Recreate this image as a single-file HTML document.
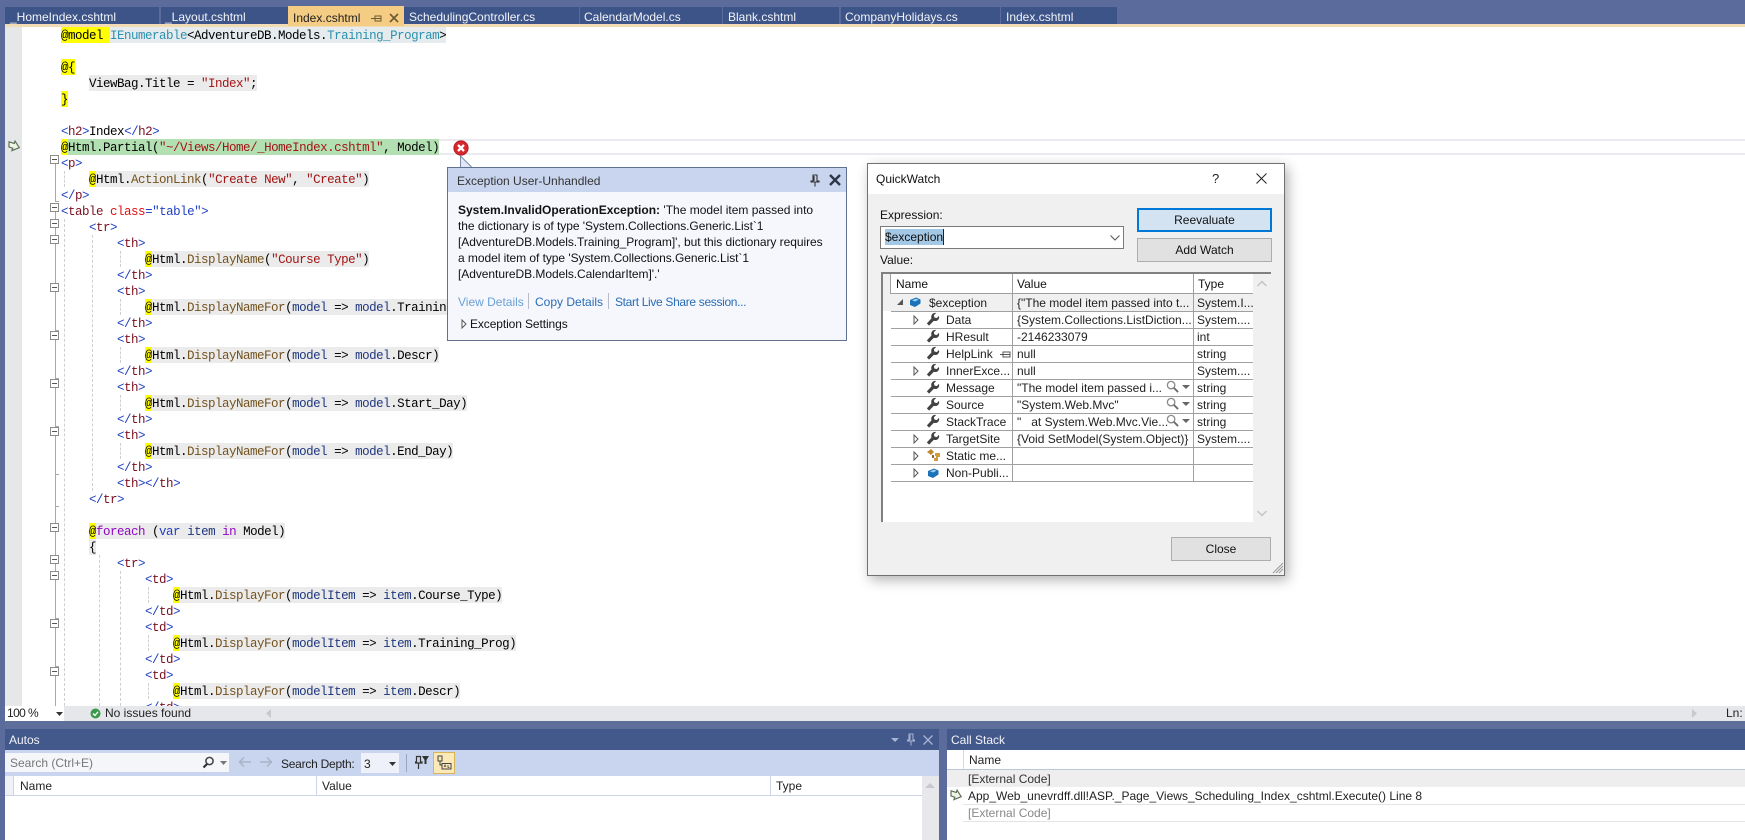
<!DOCTYPE html>
<html><head><meta charset="utf-8"><style>
html,body{margin:0;padding:0;width:1745px;height:840px;overflow:hidden;background:#fff}
#root{position:relative;width:1745px;height:840px;overflow:hidden;font:12px/16px "Liberation Sans",sans-serif;color:#1e1e1e}
.b{position:absolute}
.x{position:absolute;white-space:pre;font:12px/16px "Liberation Sans",sans-serif}
.w{color:#f1f3f8}
#code{position:absolute;left:0;top:27px;width:1745px;height:679px;overflow:hidden}
.l{position:absolute;white-space:pre;height:16px;margin-top:1px;font:12.5px/16px "Liberation Mono",monospace;letter-spacing:-.5px;color:#000}
.y{background:#ffff00;padding-top:2px}.g{background:#ebebeb;padding-top:2px}.gb{background:#e6ebee;padding-top:2px}
.d{color:#1f3fc4}.t{color:#7a1020}.a{color:#e01010}.s{color:#a31515}.c{color:#2b91af}.m{color:#74531f}.v{color:#1f377f}.p{color:#8f08c4}
.f{position:absolute;left:50px;width:7px;height:7px;border:1px solid #8c8c8c;background:#fff}
.f:after{content:"";position:absolute;left:1px;top:3px;width:5px;height:1px;background:#555}
.fl{position:absolute;left:55px;width:1px;background:#a8a8a8}
.ft{position:absolute;left:55px;width:4px;height:1px;background:#a8a8a8}
.ig{position:absolute;width:0;border-left:1px dashed #cfcfcf}
.r{position:absolute;left:891px;width:362px;height:18px;box-sizing:border-box;border-bottom:1px solid #a0a0a0}
.r .x{line-height:17px;top:1px}
.vl{position:absolute;width:1px;background:#a0a0a0}
</style></head><body><div id="root">
<svg width="0" height="0" style="position:absolute"><defs>
<symbol id="wr" viewBox="0 0 16 16"><path fill="#424242" d="M1 13 L3.5 15.5 L9 10 C11.5 11 14.5 9.5 15 6.5 C15.1 5.7 15 5 14.8 4.4 L12.3 7 L9.6 6.3 L9 3.7 L11.6 1.2 C8.8 .5 6.2 2.5 6 5.2 C5.9 6 6 6.6 6.3 7.3 Z"/></symbol>
<symbol id="mg" viewBox="0 0 14 14"><circle cx="5.5" cy="5.5" r="4" fill="none" stroke="#8a8a8a" stroke-width="1.4"/><path d="M8.5 8.5L13 13" stroke="#6a6a6a" stroke-width="2"/></symbol>
<symbol id="cube" viewBox="0 0 12 12"><path fill="#1b72b8" d="M1 4 L7 1.5 L11.5 3.5 L11.5 7.5 L6 11 L1 9 Z"/><path fill="#9fd0f0" d="M3 4.2 L7 2.6 L9.6 3.7 L6 5.5 Z"/></symbol>
<symbol id="arr" viewBox="0 0 14 12"><path fill="#eef6e6" stroke="#5f6f5a" stroke-width="1.2" d="M1 3.5 L6.5 3.5 L6.5 1 L12.5 6 L6.5 11 L6.5 8.5 L2.5 8.5 Z" transform="rotate(18 7 6)"/></symbol>
<symbol id="tri" viewBox="0 0 6 10"><path fill="#fff" stroke="#555" d="M1 1L5 5L1 9Z"/></symbol>
</defs></svg>

<!-- chrome -->
<div class="b" style="left:0;top:0;width:1745px;height:27px;background:#5b6b9b"></div>
<div class="b" style="left:5px;top:24px;width:1740px;height:3px;background:#f2dcb6"></div>
<div class="b" style="left:0;top:0;width:5px;height:840px;background:#5b6b9b"></div>
<div class="b" style="left:5px;top:7px;width:154px;height:17px;background:#3d5488"></div>
<div class="b" style="left:161px;top:7px;width:127px;height:17px;background:#3d5488"></div>
<div class="b" style="left:288px;top:6px;width:116px;height:20px;background:#f5cc84"></div>
<div class="b" style="left:404px;top:7px;width:175px;height:17px;background:#3d5488"></div>
<div class="b" style="left:580px;top:7px;width:142px;height:17px;background:#3d5488"></div>
<div class="b" style="left:723px;top:7px;width:116px;height:17px;background:#3d5488"></div>
<div class="b" style="left:841px;top:7px;width:159px;height:17px;background:#3d5488"></div>
<div class="b" style="left:1001px;top:7px;width:116px;height:17px;background:#3d5488"></div>
<span class="x w" style="left:10px;top:9px">_HomeIndex.cshtml</span>
<span class="x w" style="left:165px;top:9px">_Layout.cshtml</span>
<span class="x" style="left:293px;top:10px;color:#1e1e1e">Index.cshtml</span>
<svg class="b" style="left:371px;top:13px" width="11" height="11" viewBox="0 0 11 11"><path d="M0 5.5H4M4 2.5V8.5M4 3H10V8H4M4 5.5H10" stroke="#6b5a30" fill="none"/></svg>
<svg class="b" style="left:389px;top:13px" width="10" height="10" viewBox="0 0 10 10"><path d="M1 1L9 9M9 1L1 9" stroke="#6b5a30" stroke-width="1.6"/></svg>
<span class="x w" style="left:409px;top:9px">SchedulingController.cs</span>
<span class="x w" style="left:584px;top:9px">CalendarModel.cs</span>
<span class="x w" style="left:728px;top:9px">Blank.cshtml</span>
<span class="x w" style="left:845px;top:9px">CompanyHolidays.cs</span>
<span class="x w" style="left:1006px;top:9px">Index.cshtml</span>

<!-- editor -->
<div id="code">
<div class="b" style="left:5px;top:0;width:17px;height:679px;background:#e6e7e8"></div>
<div class="b" style="left:439px;top:112px;width:1306px;height:2px;background:#eaeaf0"></div>
<div class="b" style="left:439px;top:126px;width:1306px;height:2px;background:#eaeaf0"></div>
<div class="b" style="left:61px;top:112px;width:378px;height:16px;background:#b3e0b3"></div>

<div class="fl" style="top:128px;height:46px"></div><div class="ft" style="top:174px"></div>
<div class="fl" style="top:176px;height:503px"></div>
<div class="ft" style="top:303px"></div><div class="ft" style="top:351px"></div><div class="ft" style="top:399px"></div><div class="ft" style="top:447px"></div><div class="ft" style="top:479px"></div><div class="ft" style="top:591px"></div><div class="ft" style="top:639px"></div>
<div class="f" style="top:128px"></div><div class="f" style="top:176px"></div><div class="f" style="top:192px"></div><div class="f" style="top:208px"></div><div class="f" style="top:256px"></div><div class="f" style="top:304px"></div><div class="f" style="top:352px"></div><div class="f" style="top:400px"></div><div class="f" style="top:496px"></div><div class="f" style="top:528px"></div><div class="f" style="top:544px"></div><div class="f" style="top:592px"></div><div class="f" style="top:640px"></div>

<div class="ig" style="left:64px;top:144px;height:16px"></div>
<div class="ig" style="left:64px;top:192px;height:487px"></div>
<div class="ig" style="left:92px;top:208px;height:256px"></div>
<div class="ig" style="left:120px;top:224px;height:16px"></div><div class="ig" style="left:120px;top:272px;height:16px"></div><div class="ig" style="left:120px;top:320px;height:16px"></div><div class="ig" style="left:120px;top:368px;height:16px"></div><div class="ig" style="left:120px;top:416px;height:16px"></div>
<div class="ig" style="left:99px;top:528px;height:151px"></div>
<div class="ig" style="left:120px;top:544px;height:135px"></div>
<div class="ig" style="left:148px;top:560px;height:16px"></div><div class="ig" style="left:148px;top:608px;height:16px"></div><div class="ig" style="left:148px;top:656px;height:16px"></div>

<div class="l" style="left:61px;top:0"><span class="y">@model </span><span class="gb"><span class="c">IEnumerable</span>&lt;AdventureDB.Models.<span class="c">Training_Program</span>&gt;</span></div>
<div class="l" style="left:61px;top:32px"><span class="y">@{</span></div>
<div class="l" style="left:89px;top:48px"><span class="g">ViewBag.Title = <span class="s">"Index"</span>;</span></div>
<div class="l" style="left:61px;top:64px"><span class="y">}</span></div>
<div class="l" style="left:61px;top:96px"><span class="d">&lt;</span><span class="t">h2</span><span class="d">&gt;</span>Index<span class="d">&lt;/</span><span class="t">h2</span><span class="d">&gt;</span></div>
<div class="l" style="left:61px;top:112px"><span class="y">@</span>Html.Partial(<span class="s">"~/Views/Home/_HomeIndex.cshtml"</span>, Model)</div>
<div class="l" style="left:61px;top:128px"><span class="d">&lt;</span><span class="t">p</span><span class="d">&gt;</span></div>
<div class="l" style="left:89px;top:144px"><span class="y">@</span><span class="g">Html.<span class="m">ActionLink</span>(<span class="s">"Create New"</span>, <span class="s">"Create"</span>)</span></div>
<div class="l" style="left:61px;top:160px"><span class="d">&lt;/</span><span class="t">p</span><span class="d">&gt;</span></div>
<div class="l" style="left:61px;top:176px"><span class="d">&lt;</span><span class="t">table</span> <span class="a">class</span><span class="d">="table"&gt;</span></div>
<div class="l" style="left:89px;top:192px"><span class="d">&lt;</span><span class="t">tr</span><span class="d">&gt;</span></div>
<div class="l" style="left:117px;top:208px"><span class="d">&lt;</span><span class="t">th</span><span class="d">&gt;</span></div>
<div class="l" style="left:145px;top:224px"><span class="y">@</span><span class="g">Html.<span class="m">DisplayName</span>(<span class="s">"Course Type"</span>)</span></div>
<div class="l" style="left:117px;top:240px"><span class="d">&lt;/</span><span class="t">th</span><span class="d">&gt;</span></div>
<div class="l" style="left:117px;top:256px"><span class="d">&lt;</span><span class="t">th</span><span class="d">&gt;</span></div>
<div class="l" style="left:145px;top:272px"><span class="y">@</span><span class="g">Html.<span class="m">DisplayNameFor</span>(<span class="v">model</span> =&gt; <span class="v">model</span>.Training_Prog)</span></div>
<div class="l" style="left:117px;top:288px"><span class="d">&lt;/</span><span class="t">th</span><span class="d">&gt;</span></div>
<div class="l" style="left:117px;top:304px"><span class="d">&lt;</span><span class="t">th</span><span class="d">&gt;</span></div>
<div class="l" style="left:145px;top:320px"><span class="y">@</span><span class="g">Html.<span class="m">DisplayNameFor</span>(<span class="v">model</span> =&gt; <span class="v">model</span>.Descr)</span></div>
<div class="l" style="left:117px;top:336px"><span class="d">&lt;/</span><span class="t">th</span><span class="d">&gt;</span></div>
<div class="l" style="left:117px;top:352px"><span class="d">&lt;</span><span class="t">th</span><span class="d">&gt;</span></div>
<div class="l" style="left:145px;top:368px"><span class="y">@</span><span class="g">Html.<span class="m">DisplayNameFor</span>(<span class="v">model</span> =&gt; <span class="v">model</span>.Start_Day)</span></div>
<div class="l" style="left:117px;top:384px"><span class="d">&lt;/</span><span class="t">th</span><span class="d">&gt;</span></div>
<div class="l" style="left:117px;top:400px"><span class="d">&lt;</span><span class="t">th</span><span class="d">&gt;</span></div>
<div class="l" style="left:145px;top:416px"><span class="y">@</span><span class="g">Html.<span class="m">DisplayNameFor</span>(<span class="v">model</span> =&gt; <span class="v">model</span>.End_Day)</span></div>
<div class="l" style="left:117px;top:432px"><span class="d">&lt;/</span><span class="t">th</span><span class="d">&gt;</span></div>
<div class="l" style="left:117px;top:448px"><span class="d">&lt;</span><span class="t">th</span><span class="d">&gt;&lt;/</span><span class="t">th</span><span class="d">&gt;</span></div>
<div class="l" style="left:89px;top:464px"><span class="d">&lt;/</span><span class="t">tr</span><span class="d">&gt;</span></div>
<div class="l" style="left:89px;top:496px"><span class="y">@</span><span class="g"><span class="p">foreach</span> (<span class="d">var</span> <span class="v">item</span> <span class="p">in</span> Model)</span></div>
<div class="l" style="left:89px;top:512px"><span class="g">{</span></div>
<div class="l" style="left:117px;top:528px"><span class="d">&lt;</span><span class="t">tr</span><span class="d">&gt;</span></div>
<div class="l" style="left:145px;top:544px"><span class="d">&lt;</span><span class="t">td</span><span class="d">&gt;</span></div>
<div class="l" style="left:173px;top:560px"><span class="y">@</span><span class="g">Html.<span class="m">DisplayFor</span>(<span class="v">modelItem</span> =&gt; <span class="v">item</span>.Course_Type)</span></div>
<div class="l" style="left:145px;top:576px"><span class="d">&lt;/</span><span class="t">td</span><span class="d">&gt;</span></div>
<div class="l" style="left:145px;top:592px"><span class="d">&lt;</span><span class="t">td</span><span class="d">&gt;</span></div>
<div class="l" style="left:173px;top:608px"><span class="y">@</span><span class="g">Html.<span class="m">DisplayFor</span>(<span class="v">modelItem</span> =&gt; <span class="v">item</span>.Training_Prog)</span></div>
<div class="l" style="left:145px;top:624px"><span class="d">&lt;/</span><span class="t">td</span><span class="d">&gt;</span></div>
<div class="l" style="left:145px;top:640px"><span class="d">&lt;</span><span class="t">td</span><span class="d">&gt;</span></div>
<div class="l" style="left:173px;top:656px"><span class="y">@</span><span class="g">Html.<span class="m">DisplayFor</span>(<span class="v">modelItem</span> =&gt; <span class="v">item</span>.Descr)</span></div>
<div class="l" style="left:145px;top:672px"><span class="d">&lt;/</span><span class="t">td</span><span class="d">&gt;</span></div>
<svg class="b" style="left:7px;top:113px" width="14" height="12"><use href="#arr"/></svg>
</div>

<!-- error icon -->
<svg class="b" style="left:453px;top:140px" width="16" height="16" viewBox="0 0 16 16"><circle cx="8" cy="8" r="7.2" fill="#d8262c" stroke="#a81c20" stroke-width=".8"/><path d="M5 5L11 11M11 5L5 11" stroke="#fff" stroke-width="2.3"/></svg>

<!-- exception popup -->
<svg class="b" style="left:455px;top:155px" width="24" height="14"><path d="M5.5 1L17 12.5H5.5Z" fill="#e0e7f6"/><path d="M5.5 12V1L17 12.5" fill="none" stroke="#7a8aa8"/></svg>
<div class="b" style="left:447px;top:167px;width:398px;height:172px;background:#f5f7fd;border:1px solid #5f7090"></div>
<div class="b" style="left:448px;top:168px;width:398px;height:24px;background:#c9d5ee"></div>
<span class="x" style="left:457px;top:173px;color:#333">Exception User-Unhandled</span>
<svg class="b" style="left:810px;top:174px" width="10" height="13" viewBox="0 0 10 13"><path d="M3 1H7V7H9V8H1V7H3ZM4 2V7M5 8V12.5" fill="none" stroke="#333" stroke-width="1.1"/></svg>
<svg class="b" style="left:829px;top:174px" width="12" height="12" viewBox="0 0 12 12"><path d="M1 1L11 11M11 1L1 11" stroke="#2b3648" stroke-width="2.4"/></svg>
<span class="x" style="left:458px;top:202px;color:#111"><b>System.InvalidOperationException:</b> 'The model item passed into</span>
<span class="x" style="left:458px;top:218px;color:#111;letter-spacing:-.05px">the dictionary is of type 'System.Collections.Generic.List`1</span>
<span class="x" style="left:458px;top:234px;color:#111;letter-spacing:-.05px">[AdventureDB.Models.Training_Program]', but this dictionary requires</span>
<span class="x" style="left:458px;top:250px;color:#111;letter-spacing:-.05px">a model item of type 'System.Collections.Generic.List`1</span>
<span class="x" style="left:458px;top:266px;color:#111;letter-spacing:-.05px">[AdventureDB.Models.CalendarItem]'.'</span>
<span class="x" style="left:458px;top:294px;color:#6a9fd8">View Details</span>
<div class="b" style="left:528px;top:293px;width:1px;height:16px;background:#b8bcc8"></div>
<span class="x" style="left:535px;top:294px;color:#2a6cb5">Copy Details</span>
<div class="b" style="left:608px;top:293px;width:1px;height:16px;background:#b8bcc8"></div>
<span class="x" style="left:615px;top:294px;color:#2a6cb5;letter-spacing:-.33px">Start Live Share session...</span>
<svg class="b" style="left:461px;top:319px" width="6" height="10"><use href="#tri"/></svg>
<span class="x" style="left:470px;top:316px;color:#111;letter-spacing:-.1px">Exception Settings</span>

<!-- QuickWatch -->
<div class="b" style="left:867px;top:163px;width:416px;height:411px;background:#f0f0f0;border:1px solid #707070;box-shadow:3px 4px 12px rgba(0,0,0,.3)"></div>
<div class="b" style="left:868px;top:164px;width:416px;height:30px;background:#fff"></div>
<span class="x" style="left:876px;top:171px;color:#111">QuickWatch</span>
<span class="x" style="left:1212px;top:171px;color:#222;font-size:13px">?</span>
<svg class="b" style="left:1256px;top:173px" width="11" height="11"><path d="M.5 .5L10.5 10.5M10.5 .5L.5 10.5" stroke="#222"/></svg>
<span class="x" style="left:880px;top:207px;color:#111">Expression:</span>
<div class="b" style="left:880px;top:226px;width:242px;height:21px;background:#fff;border:1px solid #7a7a7a"></div>
<div class="b" style="left:885px;top:229px;width:58px;height:16px;background:#a3c8e6"></div>
<div class="b" style="left:943px;top:229px;width:1px;height:16px;background:#222"></div>
<span class="x" style="left:885px;top:229px;color:#111">$exception</span>
<svg class="b" style="left:1110px;top:235px" width="10" height="6"><path d="M.5 .5L5 5L9.5 .5" fill="none" stroke="#555"/></svg>
<div class="b" style="left:1137px;top:208px;width:131px;height:20px;background:#d3e3f2;border:2px solid #0078d7"></div>
<span class="x" style="left:1137px;top:212px;width:135px;text-align:center;color:#111">Reevaluate</span>
<div class="b" style="left:1137px;top:238px;width:133px;height:22px;background:#e1e1e1;border:1px solid #adadad"></div>
<span class="x" style="left:1137px;top:242px;width:135px;text-align:center;color:#111">Add Watch</span>
<span class="x" style="left:880px;top:252px;color:#111">Value:</span>

<div class="b" style="left:881px;top:272px;width:390px;height:250px;background:#fff"></div>
<div class="b" style="left:881px;top:272px;width:390px;height:2px;background:#808080"></div>
<div class="b" style="left:881px;top:272px;width:2px;height:250px;background:#808080"></div>
<div class="b" style="left:883px;top:274px;width:7px;height:20px;background:#f0f0f0"></div>
<div class="b" style="left:1253px;top:274px;width:18px;height:248px;background:#f0f0f0"></div>
<div class="b" style="left:883px;top:294px;width:370px;height:17px;background:#f0f0f0"></div>
<div class="b" style="left:891px;top:293px;width:362px;height:1px;background:#a0a0a0"></div>
<div class="vl" style="left:890px;top:274px;height:20px"></div>
<div class="vl" style="left:1012px;top:274px;height:208px"></div>
<div class="vl" style="left:1193px;top:274px;height:208px"></div>
<span class="x" style="left:896px;top:276px;color:#111">Name</span>
<span class="x" style="left:1017px;top:276px;color:#111">Value</span>
<span class="x" style="left:1198px;top:276px;color:#111">Type</span>
<svg class="b" style="left:1257px;top:280px" width="10" height="7"><path d="M.5 6L5 1.5L9.5 6" fill="none" stroke="#c4c4c4" stroke-width="1.5"/></svg>
<svg class="b" style="left:1257px;top:510px" width="10" height="7"><path d="M.5 1L5 5.5L9.5 1" fill="none" stroke="#c4c4c4" stroke-width="1.5"/></svg>

<div class="r" style="top:294px"><span class="x" style="left:38px">$exception</span><span class="x" style="left:126px">{"The model item passed into t...</span><span class="x" style="left:306px">System.I...</span></div>
<div class="r" style="top:311px"><span class="x" style="left:55px">Data</span><span class="x" style="left:126px">{System.Collections.ListDiction...</span><span class="x" style="left:306px">System....</span></div>
<div class="r" style="top:328px"><span class="x" style="left:55px">HResult</span><span class="x" style="left:126px">-2146233079</span><span class="x" style="left:306px">int</span></div>
<div class="r" style="top:345px"><span class="x" style="left:55px">HelpLink</span><span class="x" style="left:126px">null</span><span class="x" style="left:306px">string</span></div>
<div class="r" style="top:362px"><span class="x" style="left:55px">InnerExce...</span><span class="x" style="left:126px">null</span><span class="x" style="left:306px">System....</span></div>
<div class="r" style="top:379px"><span class="x" style="left:55px">Message</span><span class="x" style="left:126px">"The model item passed i...</span><span class="x" style="left:306px">string</span></div>
<div class="r" style="top:396px"><span class="x" style="left:55px">Source</span><span class="x" style="left:126px">"System.Web.Mvc"</span><span class="x" style="left:306px">string</span></div>
<div class="r" style="top:413px"><span class="x" style="left:55px">StackTrace</span><span class="x" style="left:126px">"   at System.Web.Mvc.Vie...</span><span class="x" style="left:306px">string</span></div>
<div class="r" style="top:430px"><span class="x" style="left:55px">TargetSite</span><span class="x" style="left:126px">{Void SetModel(System.Object)}</span><span class="x" style="left:306px">System....</span></div>
<div class="r" style="top:447px"><span class="x" style="left:55px">Static me...</span></div>
<div class="r" style="top:464px"><span class="x" style="left:55px">Non-Publi...</span></div>

<svg class="b" style="left:896px;top:298px" width="8" height="8"><path d="M7 1V7H1Z" fill="#555"/></svg>
<svg class="b" style="left:909px;top:296px" width="12" height="12"><use href="#cube"/></svg>
<svg class="b" style="left:913px;top:315px" width="6" height="10"><use href="#tri"/></svg>
<svg class="b" style="left:913px;top:366px" width="6" height="10"><use href="#tri"/></svg>
<svg class="b" style="left:913px;top:434px" width="6" height="10"><use href="#tri"/></svg>
<svg class="b" style="left:913px;top:451px" width="6" height="10"><use href="#tri"/></svg>
<svg class="b" style="left:913px;top:468px" width="6" height="10"><use href="#tri"/></svg>
<svg class="b" style="left:926px;top:312px" width="14" height="14"><use href="#wr"/></svg>
<svg class="b" style="left:926px;top:329px" width="14" height="14"><use href="#wr"/></svg>
<svg class="b" style="left:926px;top:346px" width="14" height="14"><use href="#wr"/></svg>
<svg class="b" style="left:926px;top:363px" width="14" height="14"><use href="#wr"/></svg>
<svg class="b" style="left:926px;top:380px" width="14" height="14"><use href="#wr"/></svg>
<svg class="b" style="left:926px;top:397px" width="14" height="14"><use href="#wr"/></svg>
<svg class="b" style="left:926px;top:414px" width="14" height="14"><use href="#wr"/></svg>
<svg class="b" style="left:926px;top:431px" width="14" height="14"><use href="#wr"/></svg>
<svg class="b" style="left:927px;top:448px" width="14" height="14" viewBox="0 0 14 14"><path d="M0 4L4 1L7 4L4 7Z" fill="#c28a30"/><path d="M8 5H13V9H11V13H7V10H9V8H8Z" fill="#d29a3a"/><path d="M5 7H7V10H5Z" fill="#8a6a30"/></svg>
<svg class="b" style="left:927px;top:467px" width="12" height="12"><use href="#cube"/></svg>
<svg class="b" style="left:1000px;top:350px" width="11" height="9" viewBox="0 0 11 9"><path d="M0 4.5H3M3 1.5V7.5M3 2H10V7H3M3 4.5H10" fill="none" stroke="#555"/></svg>
<svg class="b" style="left:1166px;top:380px" width="13" height="13"><use href="#mg"/></svg>
<svg class="b" style="left:1166px;top:397px" width="13" height="13"><use href="#mg"/></svg>
<svg class="b" style="left:1166px;top:414px" width="13" height="13"><use href="#mg"/></svg>
<svg class="b" style="left:1182px;top:385px" width="8" height="5"><path d="M0 0H8L4 4Z" fill="#666"/></svg>
<svg class="b" style="left:1182px;top:402px" width="8" height="5"><path d="M0 0H8L4 4Z" fill="#666"/></svg>
<svg class="b" style="left:1182px;top:419px" width="8" height="5"><path d="M0 0H8L4 4Z" fill="#666"/></svg>

<div class="b" style="left:1171px;top:537px;width:98px;height:22px;background:#e1e1e1;border:1px solid #adadad"></div>
<span class="x" style="left:1171px;top:541px;width:100px;text-align:center;color:#111">Close</span>
<svg class="b" style="left:1272px;top:562px" width="12" height="12"><path d="M1 11L11 1M4 11L11 4M7 11L11 7" stroke="#9a9a9a" fill="none"/></svg>

<!-- status bar -->
<div class="b" style="left:5px;top:706px;width:1740px;height:15px;background:#e6e7eb"></div>
<div class="b" style="left:5px;top:706px;width:59px;height:15px;background:#fff"></div>
<span class="x" style="left:7px;top:706px;line-height:15px;color:#222;letter-spacing:-.6px">100 %</span>
<svg class="b" style="left:56px;top:712px" width="7" height="4"><path d="M0 0H7L3.5 4Z" fill="#333"/></svg>
<svg class="b" style="left:90px;top:708px" width="11" height="11" viewBox="0 0 11 11"><circle cx="5.5" cy="5.5" r="5" fill="#3a9a4a"/><path d="M3 5.5L5 7.5L8 3.8" fill="none" stroke="#fff" stroke-width="1.4"/></svg>
<span class="x" style="left:105px;top:706px;line-height:15px;color:#222">No issues found</span>
<svg class="b" style="left:266px;top:709px" width="5" height="9"><path d="M5 0V9L0 4.5Z" fill="#c8c9ce"/></svg>
<svg class="b" style="left:1692px;top:709px" width="5" height="9"><path d="M0 0V9L5 4.5Z" fill="#c8c9ce"/></svg>
<span class="x" style="left:1726px;top:706px;line-height:15px;color:#222">Ln: 8</span>

<!-- bottom panels -->
<div class="b" style="left:5px;top:721px;width:1740px;height:8px;background:#5e6f9b"></div>
<div class="b" style="left:5px;top:729px;width:934px;height:21px;background:#43598c"></div>
<div class="b" style="left:939px;top:729px;width:8px;height:111px;background:#5b6b9b"></div>
<div class="b" style="left:947px;top:729px;width:798px;height:21px;background:#43598c"></div>
<span class="x w" style="left:9px;top:732px">Autos</span>
<svg class="b" style="left:891px;top:738px" width="8" height="4"><path d="M0 0H8L4 4Z" fill="#a9b5d3"/></svg>
<svg class="b" style="left:907px;top:733px" width="8" height="13" viewBox="0 0 8 13"><path d="M2 1H6V7H7.5V8H.5V7H2ZM3 2V7M4 8V12.5" fill="none" stroke="#a9b5d3"/></svg>
<svg class="b" style="left:923px;top:735px" width="10" height="10"><path d="M.5 .5L9.5 9.5M9.5 .5L.5 9.5" stroke="#a9b5d3" stroke-width="1.3"/></svg>
<span class="x w" style="left:951px;top:732px">Call Stack</span>

<div class="b" style="left:5px;top:750px;width:934px;height:26px;background:#c9d5ee"></div>
<div class="b" style="left:5px;top:753px;width:224px;height:19px;background:#f5f6fa"></div>
<span class="x" style="left:10px;top:755px;color:#777">Search (Ctrl+E)</span>
<svg class="b" style="left:202px;top:756px" width="13" height="13" viewBox="0 0 13 13"><circle cx="7.5" cy="5" r="3.6" fill="none" stroke="#444" stroke-width="1.5"/><path d="M5 8L1.5 11.5" stroke="#333" stroke-width="2.2"/></svg>
<svg class="b" style="left:220px;top:761px" width="7" height="4"><path d="M0 0H7L3.5 4Z" fill="#777"/></svg>
<svg class="b" style="left:238px;top:756px" width="14" height="12" viewBox="0 0 14 12"><path d="M13 6H2M6 1.5L1.5 6L6 10.5" fill="none" stroke="#a9b3c8" stroke-width="1.5"/></svg>
<svg class="b" style="left:259px;top:756px" width="14" height="12" viewBox="0 0 14 12"><path d="M1 6H12M8 1.5L12.5 6L8 10.5" fill="none" stroke="#a9b3c8" stroke-width="1.5"/></svg>
<span class="x" style="left:281px;top:756px;color:#222;letter-spacing:-.25px">Search Depth:</span>
<div class="b" style="left:361px;top:753px;width:38px;height:20px;background:#eef1f9"></div>
<span class="x" style="left:364px;top:756px;color:#222">3</span>
<svg class="b" style="left:389px;top:762px" width="7" height="4"><path d="M0 0H7L3.5 4Z" fill="#333"/></svg>
<div class="b" style="left:406px;top:754px;width:1px;height:18px;background:#9aa6c0"></div>
<svg class="b" style="left:415px;top:755px" width="14" height="15" viewBox="0 0 14 15"><path d="M1.5 1.5H5.5V7H7V8H0V7H1.5ZM3.5 8V14" fill="none" stroke="#333" stroke-width="1.2"/><path d="M7 1H14L11.5 5V9H9.5V5Z" fill="#333"/></svg>
<div class="b" style="left:433px;top:752px;width:20px;height:20px;background:#fbe9b7;border:1px solid #d9b45a"></div>
<svg class="b" style="left:436px;top:755px" width="16" height="15" viewBox="0 0 16 15"><path d="M2 1H6V6H2ZM4 6V10H6M6 8.5H15V14H6Z" fill="none" stroke="#444"/><path d="M8 12L9 10L10 12M12 10V12.5H13.5" fill="none" stroke="#444" stroke-width=".8"/></svg>

<div class="b" style="left:5px;top:776px;width:917px;height:19px;background:#fff;border-bottom:1px solid #ccd5e8;box-sizing:content-box"></div>
<div class="b" style="left:5px;top:776px;width:8px;height:19px;background:#f0f1f6"></div>
<div class="b" style="left:13px;top:776px;width:1px;height:19px;background:#ccd5e8"></div>
<div class="b" style="left:316px;top:776px;width:1px;height:19px;background:#ccd5e8"></div>
<div class="b" style="left:770px;top:776px;width:1px;height:19px;background:#ccd5e8"></div>
<span class="x" style="left:20px;top:778px;color:#222">Name</span>
<span class="x" style="left:322px;top:778px;color:#222">Value</span>
<span class="x" style="left:776px;top:778px;color:#222">Type</span>
<div class="b" style="left:922px;top:776px;width:17px;height:64px;background:#e7e8ec"></div>
<svg class="b" style="left:925px;top:783px" width="10" height="5"><path d="M0 5H10L5 0Z" fill="#c8c9ce"/></svg>

<div class="b" style="left:947px;top:769px;width:798px;height:1px;background:#b9c7de"></div>
<div class="b" style="left:963px;top:750px;width:1px;height:19px;background:#d5dbe8"></div>
<span class="x" style="left:969px;top:752px;color:#222">Name</span>
<div class="b" style="left:947px;top:770px;width:798px;height:17px;background:#eeeeee"></div>
<div class="b" style="left:963px;top:787px;width:782px;height:1px;background:#fff"></div>
<div class="b" style="left:963px;top:804px;width:782px;height:1px;background:#e4e4e4"></div>
<div class="b" style="left:963px;top:821px;width:782px;height:1px;background:#e4e4e4"></div>
<span class="x" style="left:968px;top:771px;color:#333">[External Code]</span>
<svg class="b" style="left:949px;top:789px" width="14" height="12"><use href="#arr"/></svg>
<span class="x" style="left:968px;top:788px;color:#222">App_Web_unevrdff.dll!ASP._Page_Views_Scheduling_Index_cshtml.Execute() Line 8</span>
<span class="x" style="left:968px;top:805px;color:#888">[External Code]</span>
</div></body></html>
